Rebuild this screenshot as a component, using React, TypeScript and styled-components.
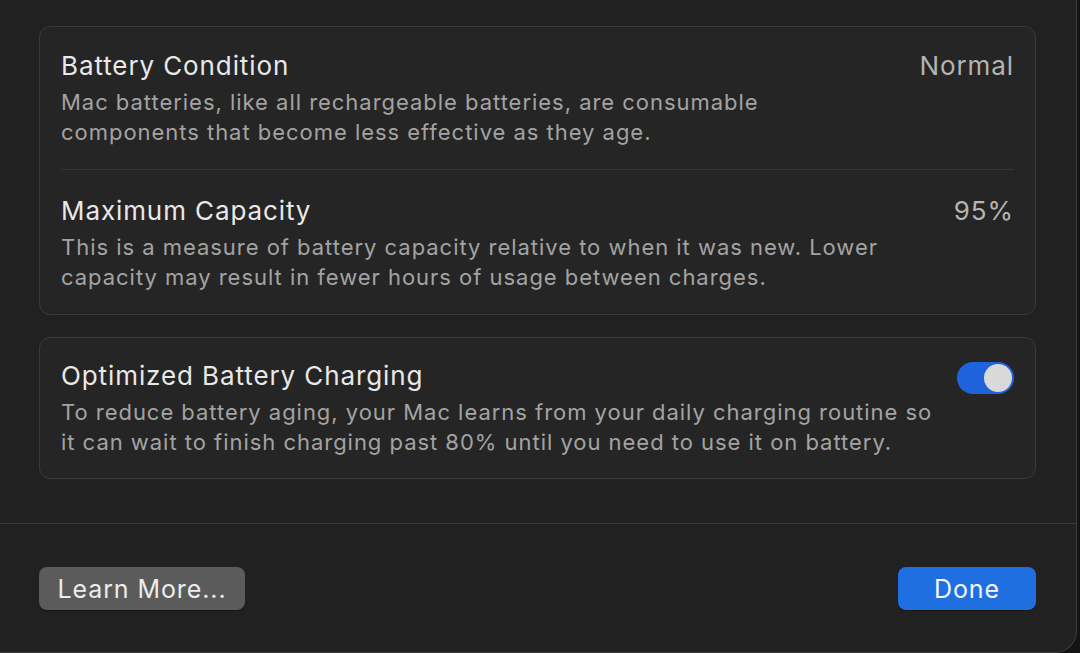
import React from 'react'
import styled, { createGlobalStyle } from 'styled-components'

const GlobalStyle = createGlobalStyle`
  html, body {
    margin: 0;
    padding: 0;
    background: #141414;
  }
  body {
    font-family: Inter, "Noto Sans", "Liberation Sans", sans-serif;
    -webkit-font-smoothing: antialiased;
  }
`

type SettingRowProps = {
  title: string
  description: string[]
  value?: string
  toggled?: boolean
  divided?: boolean
  padTop: number
  padBottom: number
}

const SettingRow: React.FC<SettingRowProps> = (props) => {
  return (
    <Row $divided={props.divided} $top={props.padTop} $bottom={props.padBottom}>
      <RowText>
        <Title>{props.title}</Title>
        <Description>
          {props.description.map((line) => (
            <span key={line}>{line}</span>
          ))}
        </Description>
      </RowText>
      {props.value && <Value>{props.value}</Value>}
      {props.toggled !== undefined && (
        <Toggle $on={props.toggled}>
          <Knob />
        </Toggle>
      )}
    </Row>
  )
}

export default function App() {
  return (
    <>
      <GlobalStyle />
      <Window>
        <Content>
          <Card>
            <SettingRow
              title="Battery Condition"
              value="Normal"
              divided
              padTop={24}
              padBottom={22}
              description={[
                'Mac batteries, like all rechargeable batteries, are consumable',
                'components that become less effective as they age.',
              ]}
            />
            <SettingRow
              title="Maximum Capacity"
              value="95%"
              padTop={26}
              padBottom={22}
              description={[
                'This is a measure of battery capacity relative to when it was new. Lower',
                'capacity may result in fewer hours of usage between charges.',
              ]}
            />
          </Card>
          <Card>
            <SettingRow
              title="Optimized Battery Charging"
              toggled
              padTop={23}
              padBottom={21}
              description={[
                'To reduce battery aging, your Mac learns from your daily charging routine so',
                'it can wait to finish charging past 80% until you need to use it on battery.',
              ]}
            />
          </Card>
        </Content>
        <Footer>
          <Button>Learn More...</Button>
          <Button $primary>Done</Button>
        </Footer>
      </Window>
    </>
  )
}

const Window = styled.div`
  width: 1077px;
  height: 653px;
  box-sizing: border-box;
  background: #212121;
  border-right: 1px solid #3d3d3d;
  border-bottom: 1px solid #3d3d3d;
  border-bottom-right-radius: 22px;
  display: flex;
  flex-direction: column;
  overflow: hidden;
`

const Content = styled.div`
  display: flex;
  flex-direction: column;
  gap: 22px;
  padding: 26px 40px 44px 39px;
  border-bottom: 1px solid #393939;
`

const Card = styled.div`
  background: #252525;
  border: 1px solid #3a3a3a;
  border-radius: 11px;
  padding: 0 21px;
`

const Row = styled.div<{ $divided?: boolean; $top: number; $bottom: number }>`
  display: flex;
  align-items: flex-start;
  justify-content: space-between;
  gap: 20px;
  padding: ${(p) => p.$top}px 0 ${(p) => p.$bottom}px 0;
  border-bottom: ${(p) => (p.$divided ? '1px solid #363636' : 'none')};
`

const RowText = styled.div`
  display: flex;
  flex-direction: column;
  gap: 6px;
`

const Title = styled.div`
  font-size: 26px;
  line-height: 30px;
  color: #e8e8e8;
  letter-spacing: 0.9px;
`

const Description = styled.div`
  display: flex;
  flex-direction: column;
  font-size: 22px;
  line-height: 30px;
  color: #a3a3a3;
  letter-spacing: 0.97px;
`

const Value = styled.div`
  font-size: 26px;
  line-height: 30px;
  color: #b4b4b4;
  letter-spacing: 0.9px;
`

const Toggle = styled.div<{ $on?: boolean }>`
  width: 57px;
  height: 32px;
  margin-top: 1px;
  border-radius: 16px;
  box-sizing: border-box;
  padding: 2px;
  background: ${(p) => (p.$on ? '#1f63dc' : '#444')};
  display: flex;
  justify-content: ${(p) => (p.$on ? 'flex-end' : 'flex-start')};
  flex-shrink: 0;
`

const Knob = styled.div`
  width: 28px;
  height: 28px;
  border-radius: 50%;
  background: #d9d9d9;
`

const Footer = styled.div`
  display: flex;
  justify-content: space-between;
  padding: 43px 40px 0 39px;
`

const Button = styled.button<{ $primary?: boolean }>`
  height: 43px;
  border: none;
  border-radius: 8px;
  padding: 0 ${(p) => (p.$primary ? '34px' : '17px')};
  min-width: ${(p) => (p.$primary ? '138px' : '206px')};
  font-family: inherit;
  font-size: 25px;
  letter-spacing: 0.9px;
  color: ${(p) => (p.$primary ? '#f4f8ff' : '#ececec')};
  background: ${(p) => (p.$primary ? '#1f6fe0' : '#5b5b5b')};
  box-shadow: 0 1px 1px rgba(0, 0, 0, 0.35);
`
